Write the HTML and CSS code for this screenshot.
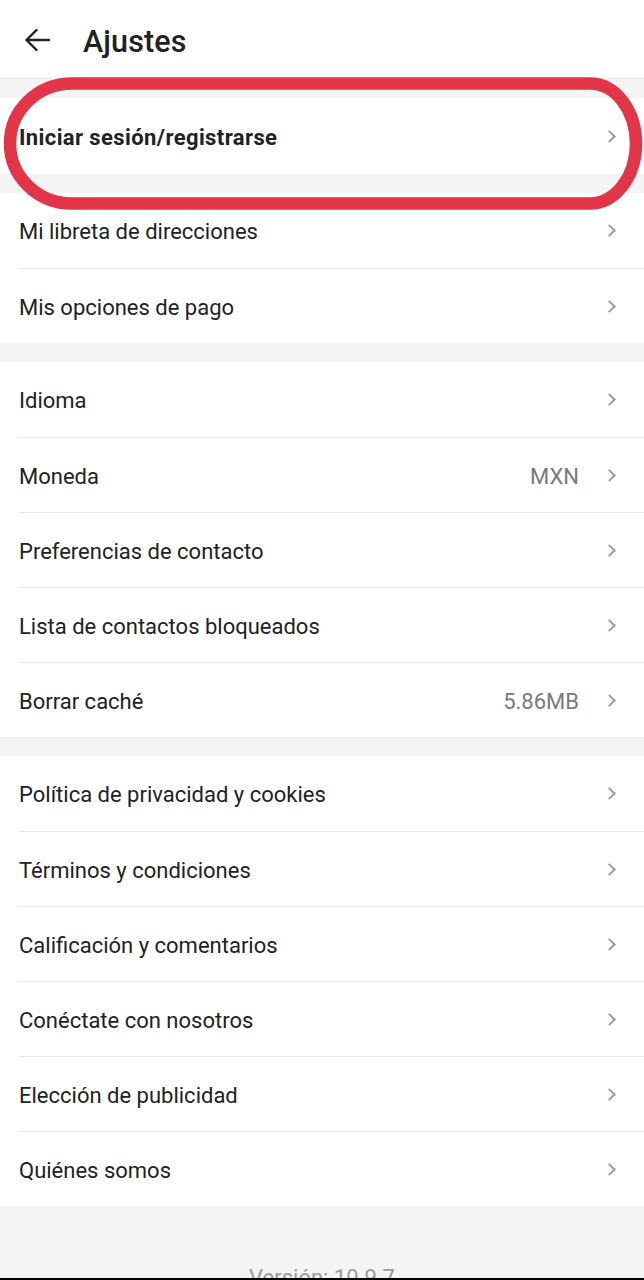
FILE: index.html
```html
<!DOCTYPE html>
<html lang="es">
<head>
<meta charset="utf-8">
<title>Ajustes</title>
<link rel="stylesheet" href="styles.css">
</head>
<body>
<header class="header">
  <svg class="back" width="26" height="24" viewBox="0 0 26 24"><path d="M25 12H2.5M12.5 2L2.5 12l10 10" fill="none" stroke="#222" stroke-width="2.4" stroke-linecap="round" stroke-linejoin="round"/></svg>
  <h1 class="title">Ajustes</h1>
</header>

<main class="content">
  <section class="group login">
    <div class="row"><div class="inner"><span class="label bold">Iniciar sesión/registrarse</span><span class="chev"></span></div></div>
    <svg class="mark" width="644" height="140" viewBox="0 0 644 140"><path d="M72 6.5H590A46 60 0 0 1 636 66.5A46 60 0 0 1 590 126.5H72A62 60 0 0 1 10 66.5A62 60 0 0 1 72 6.5Z" fill="none" stroke="#e23547" stroke-width="12.5"/></svg>
  </section>

  <section class="group">
    <div class="row"><div class="inner"><span class="label">Mi libreta de direcciones</span><span class="chev"></span></div></div>
    <div class="row"><div class="inner"><span class="label">Mis opciones de pago</span><span class="chev"></span></div></div>
  </section>

  <section class="group">
    <div class="row"><div class="inner"><span class="label">Idioma</span><span class="chev"></span></div></div>
    <div class="row"><div class="inner"><span class="label">Moneda</span><span class="value">MXN</span><span class="chev"></span></div></div>
    <div class="row"><div class="inner"><span class="label">Preferencias de contacto</span><span class="chev"></span></div></div>
    <div class="row"><div class="inner"><span class="label">Lista de contactos bloqueados</span><span class="chev"></span></div></div>
    <div class="row"><div class="inner"><span class="label">Borrar caché</span><span class="value">5.86MB</span><span class="chev"></span></div></div>
  </section>

  <section class="group">
    <div class="row"><div class="inner"><span class="label">Política de privacidad y cookies</span><span class="chev"></span></div></div>
    <div class="row"><div class="inner"><span class="label">Términos y condiciones</span><span class="chev"></span></div></div>
    <div class="row"><div class="inner"><span class="label">Calificación y comentarios</span><span class="chev"></span></div></div>
    <div class="row"><div class="inner"><span class="label">Conéctate con nosotros</span><span class="chev"></span></div></div>
    <div class="row"><div class="inner"><span class="label">Elección de publicidad</span><span class="chev"></span></div></div>
    <div class="row"><div class="inner"><span class="label">Quiénes somos</span><span class="chev"></span></div></div>
  </section>

  <p class="version">Versión: 10.9.7</p>
</main>
<div class="bottom-bar"></div>
</body>
</html>
```

FILE: styles.css
```css
* { box-sizing: border-box; }
html, body { margin: 0; padding: 0; }
body {
  background: #f4f4f4;
  font-family: Roboto, "Noto Sans", Arial, sans-serif;
  color: #222;
  width: 644px;
  height: 1280px;
  overflow: hidden;
}
.header {
  height: 79px;
  background: #fff;
  border-bottom: 1px solid #e8e8e8;
  display: flex;
  align-items: center;
  padding-left: 24px;
  padding-top: 4px;
}
.back { display: block; margin-top: -2px; }
.title {
  margin: 0 0 0 33px;
  font-size: 30.5px;
  font-weight: 500;
  color: #222;
  letter-spacing: 0.1px;
}
.content {
  display: flex;
  flex-direction: column;
  gap: 19px;
  padding-top: 19px;
}
.group {
  background: #fff;
  position: relative;
}
.login { z-index: 2; }
.login .row { height: 76px; }
.mark {
  position: absolute;
  left: 0;
  top: -21px;
  pointer-events: none;
}
.row {
  height: 75px;
  padding-left: 19px;
}
.inner {
  height: 100%;
  display: flex;
  align-items: center;
  padding-right: 28px;
  border-top: 1px solid #e9e9e9;
}
.row:first-child .inner { border-top: none; }
.label {
  flex: 1;
  font-size: 22px;
  color: #222;
  padding-top: 2px;
}
.bold { font-weight: 700; letter-spacing: 0.4px; }
.value {
  font-size: 22px;
  color: #7a7a7a;
  margin-right: 26px;
  padding-top: 2px;
}
.chev {
  width: 9px;
  height: 9px;
  border-top: 2px solid #9c9c9c;
  border-right: 2px solid #9c9c9c;
  transform: rotate(45deg);
  margin-right: 2px;
}
.version {
  margin: 40px 0 0;
  text-align: center;
  font-size: 22px;
  line-height: 26px;
  color: #9a9a9a;
}
.bottom-bar {
  position: fixed;
  left: 0;
  right: 0;
  bottom: 0;
  height: 2px;
  background: #000;
}
```
